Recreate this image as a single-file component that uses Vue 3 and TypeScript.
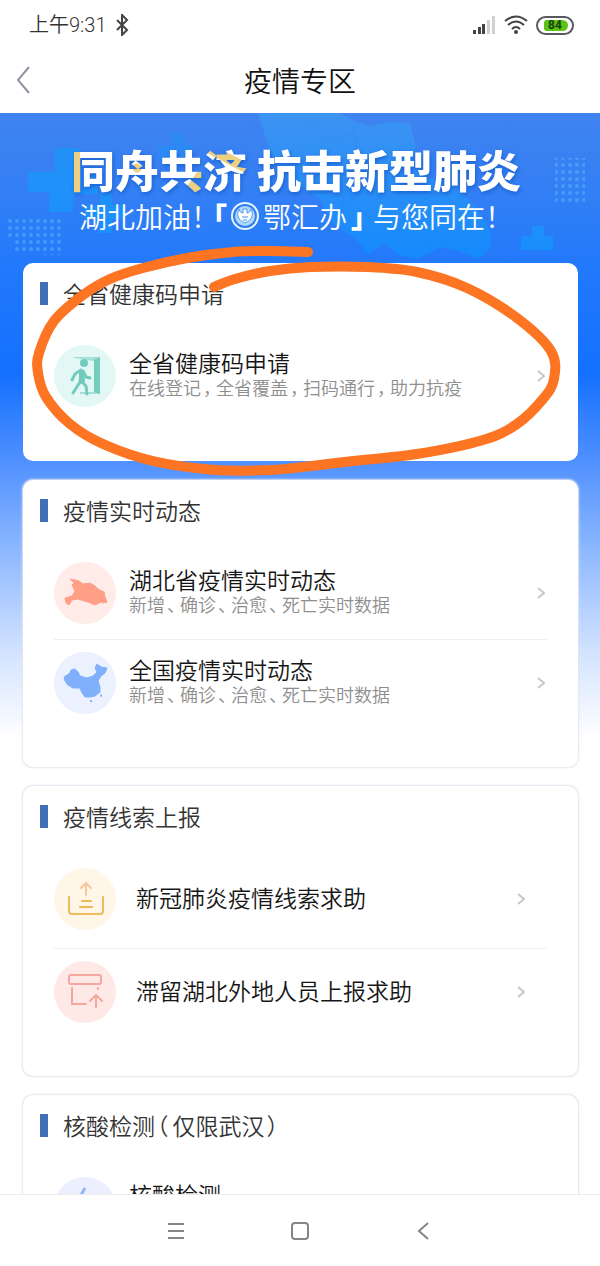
<script setup lang="ts">
interface Entry {
  icon: string
  title: string
  note?: string[]
}
interface Section {
  title: string[]
  wide?: boolean
  entries: Entry[]
}

const punctuation = /^[，、（）]$/
const pieces = (text: string): string[] => text.split(/([，、（）])/).filter(Boolean)
const isMark = (piece: string): boolean => punctuation.test(piece)

const daily = '新增、确诊、治愈、死亡实时数据'
const sections: Section[] = [
  {
    title: pieces('全省健康码申请'),
    entries: [
      { icon: 'exit', title: '全省健康码申请', note: pieces('在线登记，全省覆盖，扫码通行，助力抗疫') },
    ],
  },
  {
    title: pieces('疫情实时动态'),
    entries: [
      { icon: 'hubei', title: '湖北省疫情实时动态', note: pieces(daily) },
      { icon: 'china', title: '全国疫情实时动态', note: pieces(daily) },
    ],
  },
  {
    title: pieces('疫情线索上报'),
    wide: true,
    entries: [
      { icon: 'upload', title: '新冠肺炎疫情线索求助' },
      { icon: 'report', title: '滞留湖北外地人员上报求助' },
    ],
  },
  {
    title: pieces('核酸检测（仅限武汉）'),
    entries: [{ icon: 'test', title: '核酸检测' }],
  },
]

type Point = [number, number]
const loop: Point[] = [
  [308, 139], [270, 138], [233, 139], [187, 145], [143, 155], [110, 166], [83, 182], [54, 208],
  [39, 240], [38, 260], [46, 284], [70, 311], [103, 331], [153, 348], [215, 357], [270, 357], [320, 352],
  [353, 348], [417, 341], [483, 327], [517, 311], [543, 286], [554, 266], [551, 238],
  [517, 205], [467, 175], [417, 159], [367, 154], [310, 154], [270, 158], [235, 166], [214, 174],
]

// Catmull-Rom spline through the pen points, written as cubic segments.
function smooth(points: Point[]): string {
  let d = `M${points[0][0]} ${points[0][1]}`
  for (let i = 0; i < points.length - 1; i++) {
    const a = points[Math.max(i - 1, 0)]
    const b = points[i]
    const c = points[i + 1]
    const e = points[Math.min(i + 2, points.length - 1)]
    d += `C${b[0] + (c[0] - a[0]) / 6} ${b[1] + (c[1] - a[1]) / 6} ${c[0] - (e[0] - b[0]) / 6} ${c[1] - (e[1] - b[1]) / 6} ${c[0]} ${c[1]}`
  }
  return d
}
const penPath = smooth(loop)
</script>

<template>
  <div class="phone">
    <div class="status">
      <span class="clock">上午9:31</span>
      <svg class="bt" width="14" height="22" viewBox="0 0 14 22"><path d="M2 6l10 10-5 5V1l5 5L2 16" /></svg>
      <span class="spacer"></span>
      <svg width="24" height="20" viewBox="0 0 24 20">
        <path d="M1 15h3v4H1zM6 12h3v7H6zM10 9h3v10h-3z" fill="#444" />
        <path d="M15 5h3v14h-3zM20 1h3v18h-3z" fill="#d0d0d0" />
      </svg>
      <svg class="wifi" width="24" height="20" viewBox="0 0 24 20">
        <path d="M1 6Q12-3 23 6M4 10Q12 3 20 10M8 14Q12 10 16 14" />
        <circle cx="12" cy="17" r="2" />
      </svg>
      <span class="battery"><span class="charge">84</span></span>
    </div>
    <header class="top">
      <button class="back" aria-label="返回">
        <svg width="16" height="32" viewBox="0 0 16 32"><path d="M14 3L3 16l11 13" /></svg>
      </button>
      <h1>疫情专区</h1>
    </header>

    <main class="page">
      <svg class="art" viewBox="0 0 600 150" aria-hidden="true">
        <defs>
          <pattern id="dots" width="7" height="7" patternUnits="userSpaceOnUse">
            <circle cx="3" cy="3" r="2" />
          </pattern>
          <linearGradient id="land" x1="0" y1="0" x2="0" y2="1">
            <stop offset="0" stop-color="#3a9cf4" stop-opacity=".65" />
            <stop offset="1" stop-color="#108ffd" stop-opacity=".75" />
          </linearGradient>
        </defs>
        <path class="land" d="M258 0H340l14 8 14 5 20-4 22 1 6 24-4 18 18 14 24 6 22 22 14 22 2 16-12 14-22-8-16-4-26 12-18-4-14-12-16 12-12-16-22-14-14-26-34-22-16-26z" />
        <path class="vein" d="M310 8l16 18 30-6M352 12l8 40 40 10M330 100l32-20 50 12 40-18M400 80l6 34 24 20M346 60l-4 40" />
        <path class="cross" d="M55 35h24v20h18v26H73v18H49V79H28V59h27z" />
        <path class="cross dim" d="M172 20h12v12h8v14h-34V33h14z" />
        <path class="cross" d="M100 80h12v12h14v14h-14v14h-13v-14H85V92h15z" />
        <path class="cross" d="M532 113h12v10h9v14h-32v-14h11z" />
        <path class="grid" d="M6 103h56v39h-20v-4H13v-14H6zM555 45h30v45h-30z" />
      </svg>

      <div class="banner">
        <p class="slogan">
          <span><i class="c1">同</i><i class="c2">舟</i><i class="c3">共</i><i class="c4">济</i></span>
          <span>抗击新型肺炎</span>
        </p>
        <p class="cheer">
          <span>湖北加油<i class="half">！</i></span>
          <span class="brand"><b class="half">「</b>
            <svg width="28" height="28" viewBox="0 0 28 28">
              <circle cx="14" cy="14" r="13" fill="none" stroke="#e6f4ff" stroke-width="2" />
              <circle cx="14" cy="14" r="10" fill="#b4d9ff" />
              <path d="M8 7c-3 6-1 11 6 14 7-3 9-8 6-14-1 3-2 4-4 4V7h-4v4c-2 0-3-1-4-4z" fill="#fff" stroke="#4c9af2" stroke-width="1" />
              <path d="M11 15h6M12 18h4" stroke="#3c8fee" stroke-width="1" />
            </svg>
            <span>鄂汇办</span><b class="half">」</b></span>
          <span>与您同在<i class="half">！</i></span>
        </p>
      </div>

      <div class="cards">
        <section v-for="(s, si) in sections" :key="si" class="card" :class="{ wide: s.wide }">
          <h2><template v-for="(p, i) in s.title" :key="i"><span v-if="isMark(p)" class="mark">{{ p }}</span><template v-else>{{ p }}</template></template></h2>
          <ul>
            <li v-for="e in s.entries" :key="e.title">
              <a href="#">
                <svg class="icon" width="62" height="62" viewBox="0 0 62 62" aria-hidden="true">
                  <g v-if="e.icon === 'exit'">
                    <circle cx="31" cy="31" r="31" fill="#e3f8f5" />
                    <path d="M20 12h26v37H26v-2h14V16l-20-3z" fill="#a5e0d5" />
                    <path d="M40 15l6-3v37l-6-2z" fill="#73cdbb" />
                    <circle cx="30" cy="18" r="4" fill="#73cbbb" />
                    <path d="M27 25l-6 4-3 6M27 26l-1 11-7 11M27 36l5 5 1 8M29 26l3 6 4 1" fill="none" stroke="#73cbbb" stroke-width="3" stroke-linecap="round" stroke-linejoin="round" />
                    <path d="M25 25h5l1 12-6 1z" fill="#73cbbb" />
                  </g>
                  <g v-else-if="e.icon === 'hubei'">
                    <circle cx="31" cy="31" r="31" fill="#ffece8" />
                    <path d="M16 17L25 19 29 22 36 21 41 24 44 27 50 30 51 35 53 40 49 41 47 40 41 43 34 40 24 37 18 38 15 43 12 41 11 36 18 34 21 29 18 23 20 21Z" fill="#ff9f88" stroke="#ff9f88" stroke-linejoin="round" />
                  </g>
                  <g v-else-if="e.icon === 'china'">
                    <circle cx="31" cy="31" r="31" fill="#ebf1fe" />
                    <path d="M10 25L16 21 17 18 21 17 24 20 26 24 33 26 39 24 43 20 41 16 43 12 47 15 53 16 51 21 47 24 44 29 46 35 46 40 41 44 36 45 31 45 28 41 26 36 19 36 14 33 11 29Z" fill="#80b0fb" stroke="#80b0fb" stroke-linejoin="round" />
                    <path d="M36 48h2v2h-2zM46 43l2-1v3h-1z" fill="#80b0fb" />
                  </g>
                  <g v-else-if="e.icon === 'upload'" fill="none" stroke-linecap="round" stroke-linejoin="round">
                    <circle cx="31" cy="31" r="31" fill="#fff6e8" />
                    <path d="M15 29v14q0 3 3 3h28q3 0 3-3V29" stroke="#edbb5f" stroke-width="2" />
                    <path d="M28 33h9M26 39h12" stroke="#efb858" stroke-width="2" />
                    <path d="M32 27V15M27 20l5-5 5 5" stroke="#f5c79a" stroke-width="2" />
                  </g>
                  <g v-else-if="e.icon === 'report'" fill="none" stroke="#f3a79e" stroke-width="2" stroke-linecap="round" stroke-linejoin="round">
                    <circle cx="31" cy="31" r="31" fill="#ffe9e6" stroke="none" />
                    <rect x="15" y="14" width="32" height="9" rx="2" />
                    <path d="M18 27v16h14M44 27v1M42 46V34M36 40l6-6 6 6" />
                  </g>
                  <g v-else>
                    <circle cx="31" cy="31" r="31" fill="#ebeffe" />
                    <path d="M31 11l-5 9h5l-4 9" fill="none" stroke="#8db7f8" stroke-width="3" stroke-linejoin="round" />
                  </g>
                </svg>
                <span class="words">
                  <strong>{{ e.title }}</strong>
                  <small v-if="e.note"><template v-for="(p, i) in e.note" :key="i"><span v-if="isMark(p)" class="mark">{{ p }}</span><template v-else>{{ p }}</template></template></small>
                  <small v-else-if="!s.wide">&nbsp;</small>
                </span>
                <svg class="go" width="8" height="12" viewBox="0 0 8 12" aria-hidden="true"><path d="M1 1l6 5-6 5" /></svg>
              </a>
            </li>
          </ul>
        </section>
      </div>

      <svg class="pen" viewBox="0 0 600 400" aria-hidden="true"><path :d="penPath" /></svg>
    </main>

    <nav class="keys">
      <button aria-label="菜单"><svg width="20" height="20" viewBox="0 0 20 20"><path d="M2 3h16M2 10h16M2 17h16" /></svg></button>
      <button aria-label="主页"><svg width="20" height="20" viewBox="0 0 20 20"><rect x="2" y="2" width="16" height="16" rx="3" /></svg></button>
      <button aria-label="后退"><svg width="20" height="20" viewBox="0 0 20 20"><path d="M14 2l-9 8 9 8" /></svg></button>
    </nav>
  </div>
</template>

<style>
body {
  margin: 0;
  background: #fff;
}
</style>

<style scoped>
.phone {
  display: flex;
  flex-direction: column;
  height: 100vh;
  overflow: hidden;
  background: #fff;
  color: #222;
  font-family: "Noto Sans CJK SC", sans-serif;
  font-weight: 350;
}
h1, h2, p, ul {
  margin: 0;
  padding: 0;
  font-weight: inherit;
}
i { font-style: normal; }
svg { display: block; flex: none; }
button {
  display: flex;
  align-items: center;
  justify-content: center;
  padding: 0;
  border: 0;
  background: none;
}
.status {
  display: flex;
  flex: none;
  align-items: center;
  height: 50px;
  padding: 0 26px 0 29px;
}
.clock {
  color: #333;
  font: 350 20px/24px Roboto, "Noto Sans CJK SC", sans-serif;
}
.bt { margin-left: 9px; }
.bt path { fill: none; stroke: #444; stroke-width: 2; }
.spacer { flex: 1; }
.wifi { margin: 0 8px; }
.wifi path { fill: none; stroke: #444; stroke-width: 2; }
.wifi circle { fill: #444; }
.battery {
  display: flex;
  box-sizing: border-box;
  width: 38px;
  height: 19px;
  padding: 2px 4px 2px 6px;
  border: 2px solid #555b60;
  border-radius: 10px;
}
.charge {
  flex: 1;
  padding-right: 2px;
  border-radius: 3px 6px 6px 3px;
  background: #5cc417;
  color: #174208;
  font: bold 12px/11px Roboto, sans-serif;
  text-align: center;
}
.top {
  display: flex;
  flex: none;
  align-items: center;
  height: 59px;
  padding: 0 14px 4px;
}
.back { width: 18px; height: 44px; }
.back path { fill: none; stroke: #8f95a5; stroke-width: 2; }
.top h1 {
  flex: 1;
  padding-right: 18px;
  color: #111;
  font-size: 28px;
  line-height: 58px;
  text-align: center;
}
.page {
  position: relative;
  flex: 1;
  min-height: 0;
  overflow: hidden;
  background: linear-gradient(#3f83ef 0, #337ff5 80px, #2279fb 150px, #1470ff 260px, #4a8dff 340px, #8fb9ff 440px, #d3e3ff 540px, #fff 625px);
}
.art, .pen {
  position: absolute;
  top: 0;
  left: 0;
  width: 100%;
  pointer-events: none;
}
.land { fill: url(#land); }
.vein { fill: none; stroke: #2a82e8; stroke-opacity: .35; }
.cross { fill: #129cfb; fill-opacity: .6; }
.dim { fill-opacity: .35; }
.grid { fill: url(#dots); }
#dots circle { fill: #4daafb; fill-opacity: .65; }
.banner {
  position: relative;
  box-sizing: border-box;
  height: 150px;
  padding-top: 31px;
  color: #fff;
}
.slogan {
  display: flex;
  justify-content: center;
  gap: 10px;
  height: 50px;
  padding-right: 8px;
  font-size: 44px;
  font-weight: 900;
  line-height: 50px;
  white-space: nowrap;
  filter: drop-shadow(1px 2px 2px #1c62d0);
}
.slogan i {
  background-clip: text;
  -webkit-background-clip: text;
  color: transparent;
}
.c1 { background-image: linear-gradient(90deg, #edcf81 9px, #fff 9px); }
.c2 { background-image: radial-gradient(circle at 22px 31px, #edcf81 4px, #fff 5px); }
.c3 { background-image: linear-gradient(125deg, #fff 70%, #edcf81 71%); }
.c4 { background-image: linear-gradient(28deg, #fff 57%, #edcf81 58%, #edcf81 70%, #fff 71%); }
.cheer {
  display: flex;
  align-items: center;
  justify-content: center;
  height: 44px;
  padding-right: 22px;
  font-size: 28px;
  line-height: 44px;
  white-space: nowrap;
}
.half { font-feature-settings: "halt"; }
.brand {
  display: flex;
  align-items: center;
  gap: 4px;
  margin: 0 8px;
}
.brand b { font-weight: 900; }
.cards {
  position: relative;
  display: flex;
  flex-direction: column;
  gap: 19px;
  padding: 0 22px 19px 23px;
}
.card {
  padding: 0 31px 53px;
  border-radius: 10px;
  background: #fff;
  box-shadow: 0 0 2px 1px #dfe5ee;
}
.card:first-child { box-shadow: none; padding-bottom: 54px; }
.card h2 {
  display: flex;
  align-items: center;
  height: 60px;
  margin-left: -14px;
  color: #333;
  font-size: 23px;
}
.card h2::before {
  width: 8px;
  height: 23px;
  margin-right: 15px;
  background: #4170b9;
  content: "";
}
.mark {
  margin: 0 4px 0 2px;
  font-feature-settings: "halt";
}
ul { padding-top: 22px; list-style: none; }
li + li {
  margin-top: 15px;
  padding-top: 12px;
  border-top: 1px solid #eceef3;
}
.wide li + li { margin-top: 18px; }
a {
  display: flex;
  align-items: center;
  color: inherit;
  text-decoration: none;
}
.words {
  display: flex;
  flex: 1;
  flex-direction: column;
  margin: 0 0 4px 13px;
  white-space: nowrap;
}
.words strong {
  color: #161616;
  font-size: 23px;
  font-weight: inherit;
  line-height: 26px;
}
.words small {
  color: #8e8e8e;
  font-size: 18px;
  line-height: 24px;
}
.go { margin-right: 2px; }
.go path { fill: none; stroke: #c8c8cc; stroke-width: 2; }
.wide .words { margin-left: 20px; }
.wide .go { margin-right: 22px; }
.pen path {
  fill: none;
  stroke: #fd7423;
  stroke-width: 10;
  stroke-linecap: round;
}
.keys {
  display: flex;
  flex: none;
  justify-content: center;
  gap: 80px;
  height: 71px;
  border-top: 1px solid #ebebeb;
  background: #fff;
}
.keys button { width: 44px; }
.keys path, .keys rect { fill: none; stroke: #858585; stroke-width: 2; }
</style>
